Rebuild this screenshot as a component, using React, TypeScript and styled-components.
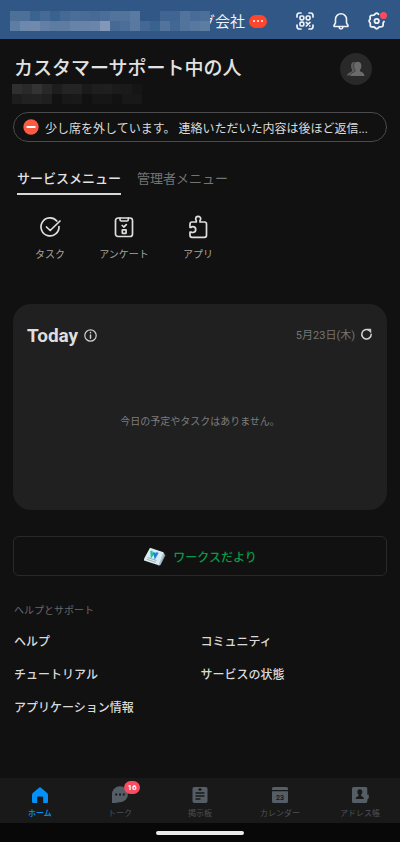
import React from "react";
import styled, { createGlobalStyle } from "styled-components";

const GlobalStyle = createGlobalStyle`
  * { box-sizing: border-box; }
  body {
    margin: 0;
    background: #111111;
    color: #dedede;
    font-family: Roboto, "Noto Sans CJK JP", sans-serif;
  }
  button { font: inherit; color: inherit; background: none; border: 0; padding: 0; cursor: pointer; }
  a { color: inherit; text-decoration: none; }
  h1, h2, p, ul { margin: 0; padding: 0; }
  ul { list-style: none; }
  svg { display: block; }
`;

const Page = styled.div`
  min-height: 100vh;
  display: flex;
  flex-direction: column;
`;

const TopBar = styled.header`
  display: flex;
  align-items: center;
  height: 39px;
  padding: 3px 13px 0 10px;
  background: #305785;
  color: #eef2f7;
`;

const Mosaic = styled.div<{ $columns: number }>`
  position: relative;
  z-index: 1;
  display: grid;
  grid-template-columns: repeat(${(p) => p.$columns}, 10px);
  grid-auto-rows: 10px;
`;

const MosaicCell = styled.span<{ $tone: string }>`
  background: ${(p) => p.$tone};
`;

const CompanyName = styled.span`
  margin-left: -10px;
  padding-top: 2px;
  font-size: 15px;
  line-height: 20px;
`;

const ChatBubble = styled.span`
  display: flex;
  align-items: center;
  justify-content: center;
  gap: 2px;
  width: 18px;
  height: 13px;
  margin-left: 4px;
  border-radius: 7px;
  background: #ff452c;
`;

const BubbleDot = styled.i`
  width: 2px;
  height: 2px;
  border-radius: 1px;
  background: #fff;
`;

const TopActions = styled.div`
  display: flex;
  gap: 16px;
  margin-left: auto;
`;

const IconButton = styled.button`
  position: relative;
  width: 20px;
  height: 20px;
`;

const AlertDot = styled.span`
  position: absolute;
  top: 1px;
  right: 0;
  width: 7px;
  height: 7px;
  border-radius: 50%;
  background: #ff4b5e;
`;

const Content = styled.main`
  padding: 14px 13px 0;
`;

const Profile = styled.section`
  display: flex;
  justify-content: space-between;
  height: 59px;
`;

const UserName = styled.h1`
  padding: 2px 0 1px 1px;
  font-size: 19px;
  line-height: 28px;
  font-weight: 500;
  color: #e2e2e2;
`;

const NameBlock = styled.div`
  > ${Mosaic} { margin-left: -1px; }
`;

const Avatar = styled.button`
  display: flex;
  align-items: center;
  justify-content: center;
  width: 32px;
  height: 32px;
  margin-right: 15px;
  border-radius: 50%;
  background: #292929;
`;

const StatusPill = styled.button`
  display: flex;
  align-items: center;
  gap: 6px;
  width: 100%;
  height: 30px;
  padding: 0 9px;
  border: 1px solid #4b4b4b;
  border-radius: 15px;
  font-size: 12px;
  text-align: left;
  color: #dcdcdc;
`;

const StatusText = styled.span`
  overflow: hidden;
  white-space: nowrap;
  text-overflow: ellipsis;
`;

const Tabs = styled.div`
  display: flex;
  gap: 16px;
  margin-top: 24px;
  padding-left: 4px;
`;

const Tab = styled.button<{ $active?: boolean }>`
  height: 29px;
  padding: 3px 0 4px;
  border-bottom: 2px solid ${(p) => (p.$active ? "#d8d8d8" : "transparent")};
  font-size: 13px;
  line-height: 20px;
  font-weight: ${(p) => (p.$active ? 500 : 400)};
  color: ${(p) => (p.$active ? "#e2e2e2" : "#747474")};
`;

const Services = styled.nav`
  display: grid;
  grid-template-columns: repeat(5, 1fr);
  padding: 20px 4px 0 0;
`;

const Service = styled.a`
  display: flex;
  flex-direction: column;
  align-items: center;
  gap: 8px;
  font-size: 10px;
  line-height: 16px;
  white-space: nowrap;
  color: #a5a5a5;
`;

const TodayCard = styled.section`
  display: flex;
  flex-direction: column;
  min-height: 206px;
  margin-top: 41px;
  padding: 20px 14px;
  border-radius: 18px;
  background: #202020;
`;

const TodayHeader = styled.div`
  display: flex;
  align-items: center;
`;

const TodayTitle = styled.h2`
  margin-right: 6px;
  font-size: 19px;
  line-height: 24px;
  font-weight: 700;
  color: #dedede;
`;

const TodayDate = styled.time`
  margin: 0 5px 0 auto;
  font-size: 11px;
  line-height: 18px;
  color: #757575;
`;

const CardIconButton = styled.button<{ $raised?: boolean }>`
  width: 13px;
  height: 13px;
  margin-bottom: ${(p) => (p.$raised ? 4 : 1)}px;
`;

const EmptyNote = styled.p`
  margin-top: 65px;
  text-align: center;
  font-size: 10px;
  line-height: 18px;
  color: #7d7d7d;
`;

const NewsLink = styled.a`
  display: flex;
  align-items: center;
  justify-content: center;
  gap: 7px;
  height: 40px;
  margin-top: 26px;
  border: 1px solid #292929;
  border-radius: 6px;
  font-size: 12px;
  font-weight: 500;
  color: #079b47;
`;

const HelpTitle = styled.h2`
  margin-top: 27px;
  padding-left: 1px;
  font-size: 10px;
  line-height: 16px;
  font-weight: 400;
  color: #696969;
`;

const HelpList = styled.ul`
  display: grid;
  grid-template-columns: 1fr 1fr;
  row-gap: 15px;
  margin-top: 14px;
  padding-left: 1px;
  font-size: 12px;
  line-height: 18px;
  font-weight: 500;
  color: #dadada;
`;

const BottomNav = styled.nav`
  display: grid;
  grid-template-columns: repeat(5, 1fr);
  height: 45px;
  margin-top: auto;
  padding-top: 7px;
  background: #191919;
`;

const NavItem = styled.a<{ $active?: boolean }>`
  display: flex;
  flex-direction: column;
  align-items: center;
  gap: 3px;
  font-size: 8px;
  line-height: 12px;
  font-weight: ${(p) => (p.$active ? 500 : 400)};
  color: ${(p) => (p.$active ? "#0491f7" : "#4d5257")};
`;

const NavIcon = styled.span<{ $active?: boolean }>`
  position: relative;
  color: ${(p) => (p.$active ? "#0491f7" : "#555e66")};
`;

const Badge = styled.span`
  position: absolute;
  top: -4px;
  left: 14px;
  width: 16px;
  height: 13px;
  border-radius: 7px;
  background: #f94c60;
  color: #fff;
  text-align: center;
  font-size: 8px;
  line-height: 13px;
  font-weight: 700;
`;

const GestureArea = styled.footer`
  display: flex;
  align-items: center;
  justify-content: center;
  height: 19px;
  background: #080808;
`;

const GestureBar = styled.div`
  width: 22%;
  height: 4px;
  border-radius: 2px;
  background: #ece9ea;
`;

const companyTones = [
  "#4d7099", "#4d7099", "#3a6390", "#466a95", "#3a628f", "#456994", "#4b6e98", "#496c97", "#466a95", "#4b6e98",
  "#52749c", "#52749c", "#5b7aa2", "#305785", "#305785", "#416592", "#416592", "#52749c", "#486c97", "#4c6f99",
  "#5e7da4", "#6c88ac", "#7089ad", "#637fa5", "#5e7ba1", "#5e7ba1", "#6883a9", "#6883a9", "#6b84aa", "#8398b8",
  "#466a95", "#4b6e98", "#587aa0", "#446893", "#3a628f", "#52749c", "#426792", "#52749c", "#58789f", "#5c7ca2",
];

const userTones = [
  "#2f2f2f", "#292929", "#333333", "#282828", "#1d1d1d", "#242424", "#242424", "#1a1a1a", "#1e1e1e", "#1f1f1f", "#1b1b1b", "#1a1a1a", "#151515",
  "#1d1d1d", "#212121", "#222222", "#1f1f1f", "#121212", "#181818", "#191919", "#111111", "#161616", "#161616", "#121212", "#181818", "#181818",
];

const Blocks = ({ tones, columns }: { tones: string[]; columns: number }) => (
  <Mosaic $columns={columns} aria-hidden="true">
    {tones.map((tone, i) => (
      <MosaicCell key={i} $tone={tone} />
    ))}
  </Mosaic>
);

const line = {
  fill: "none",
  stroke: "currentColor",
  strokeLinecap: "round" as const,
  strokeLinejoin: "round" as const,
};

const QrIcon = () => (
  <svg width="20" height="20" viewBox="0 0 20 20" {...line} strokeWidth="1.700">
    <path d="M2 6V4.5Q2 2 4.5 2H6M14 2h1.500Q18 2 18 4.500V6M18 14v1.500Q18 18 15.500 18H14M6 18H4.500Q2 18 2 15.500V14" />
    <rect x="5" y="5" width="3.800" height="3.800" rx="1.200" />
    <rect x="11.200" y="5" width="3.800" height="3.800" rx="1.200" />
    <rect x="5" y="11.200" width="3.800" height="3.800" rx="1.200" />
    <path d="M11.300 11.300l1.500 1.500M15 11.300l-3.700 3.700M14.800 14.800v.2" />
  </svg>
);

const BellIcon = () => (
  <svg width="20" height="20" viewBox="0 0 20 20" {...line} strokeWidth="1.600">
    <path d="M4.500 8.200a5.500 5.500 0 0 1 11 0v3.600l1.500 2.700q.3 1-.7 1H3.700q-1 0-.7-1l1.500-2.700zM8 16q.3 2 2 2t2-2" />
  </svg>
);

const GearIcon = () => (
  <svg width="20" height="20" viewBox="0 0 20 20" {...line} strokeWidth="1.800">
    <path d="M11.500 3.200L10.300 2.300Q9.500 1.900 8.700 2.500L7 4.200 4.300 4.400Q3.200 4.600 3.100 5.700L3.200 8 2.300 9.300Q1.900 10 2.300 10.800L3.300 12.200V14.700Q3.500 15.700 4.500 15.800L7.200 16 8.900 17.500Q9.700 18 10.500 17.500L12.300 15.900 15 15.700Q16 15.500 16.100 14.500V12L17 10.500" />
    <circle cx="9.700" cy="10" r="2.200" />
  </svg>
);

const PeopleIcon = () => (
  <svg width="18" height="16" viewBox="0 0 18 16">
    <path d="M0 14.500Q.2 12 3.800 10.900L5 10V8.800Q3.900 7.200 4 4.300Q4.300 1 7.400 1H9V14.500z" fill="#5c5c5c" />
    <path
      d="M7 5Q7.200 .8 10.700 .8T14.400 5Q14.500 7.500 12.900 9.300V10.300Q17.600 11.700 17.500 15H3.300Q3.300 12 8.500 10.400V9.300Q7 7.500 7 5z"
      fill="#6a6a6a"
      stroke="#292929"
      strokeWidth="1"
      paintOrder="stroke"
    />
  </svg>
);

const BusyIcon = () => (
  <svg width="16" height="16" viewBox="0 0 16 16">
    <circle cx="8" cy="8" r="7.700" fill="#fa5b42" />
    <rect x="3.300" y="7" width="9.400" height="2" rx="1" fill="#fff" />
  </svg>
);

const TaskIcon = () => (
  <svg width="24" height="24" viewBox="0 0 24 24" {...line} strokeWidth="1.700" stroke="#dedede">
    <path d="M18.800 6A9 9 0 1 0 21 11.500M8.500 12l3.700 3.500L22 6" />
  </svg>
);

const SurveyIcon = () => (
  <svg width="24" height="24" viewBox="0 0 24 24" {...line} strokeWidth="1.700" stroke="#dedede">
    <rect x="3.500" y="3" width="17" height="18.500" rx="2.500" />
    <path d="M8 3.200v1.300Q8 6 9.300 6H15q1.300 0 1.300-1.500V3.200M10.200 10.500l1.600 1.500 2.500-2.300" />
    <rect x="10.300" y="14.800" width="3.800" height="3.500" rx=".3" />
  </svg>
);

const AppIcon = () => (
  <svg width="24" height="24" viewBox="0 0 24 24" {...line} strokeWidth="1.700" stroke="#dedede">
    <path d="M4 11V9.200Q4 7 6 7H10.300V5.400Q9.600 4.700 9.700 3.800A2.500 2.500 0 0 1 14.700 3.800Q14.700 4.700 14 5.400V7H18.500Q20.500 7 20.500 9V20.300Q20.500 22.300 18.500 22.300H6Q4 22.300 4 20.300V17H5Q5.600 17.500 6.800 17.500A2.900 2.900 0 0 0 6.800 11.700Q5.600 11.700 5 12.300H4z" />
  </svg>
);

const InfoIcon = () => (
  <svg width="13" height="13" viewBox="0 0 13 13" {...line} strokeWidth="1.200" stroke="#cfcfcf">
    <circle cx="6.500" cy="6.500" r="5.700" />
    <path d="M6.500 6v3.300M6.500 3.500v.2" strokeWidth="1.500" />
  </svg>
);

const RefreshIcon = () => (
  <svg width="13" height="13" viewBox="0 0 13 13" {...line} strokeWidth="1.500" stroke="#d5d5d5">
    <path d="M9 2.300A4.700 4.700 0 1 0 11.200 6.300" />
    <path d="M7.700 1.200H10.800V4.300z" fill="#d5d5d5" strokeWidth=".8" />
  </svg>
);

const NewsIcon = () => (
  <svg width="23" height="19" viewBox="0 0 23 19">
    <path d="M18.500 5.500L22.500 8 17.600 18 15.300 18.500z" fill="#91a6b1" />
    <path d="M7 .8L20.500 5.300 15.700 18.300 1 13.400Q.8 12 1.700 10.500z" fill="#dcebf0" />
    <path d="M20.500 5.300l.8 1.500-4.700 11.500-1.200.1z" fill="#b7cbd4" />
    <path d="M4.500 10.500l9 3M3.800 12.300l9 3" stroke="#a0b1bf" strokeWidth="1" />
    <path d="M8.400 3.900l.3 4.800 2.700-3.200" fill="none" stroke="#19c891" strokeWidth="2.200" />
    <path d="M11.400 5.700l.8 4 2.400-4.200" fill="none" stroke="#207fe0" strokeWidth="2.200" />
  </svg>
);

const HomeIcon = () => (
  <svg width="20" height="20" viewBox="0 0 20 20" fill="currentColor">
    <path d="M9 2.700q1-.8 2 0L17.200 8q.8.800.8 2v6.800q0 1.200-1.200 1.200H13.200v-5.300q0-1.200-1.200-1.200H8.400q-1.200 0-1.200 1.200V18H3.200Q2 18 2 16.800V10Q2 8.800 2.800 8z" />
  </svg>
);

const TalkIcon = () => (
  <svg width="20" height="20" viewBox="0 0 20 20">
    <path d="M2 10A8 8 0 1 1 10 17.200Q7.500 17.200 5.200 18H2.300Q2 18 2 17.500z" fill="currentColor" />
    <path d="M5.200 8.400h2v2h-2zm3.800 0h2v2H9zm3.800 0h2v2h-2z" fill="#191919" />
  </svg>
);

const BoardIcon = () => (
  <svg width="20" height="20" viewBox="0 0 20 20">
    <rect x="2.500" y="2" width="15" height="16" rx="1.800" fill="currentColor" />
    <path d="M8.500 4.500h3M5.500 8h9M5.500 11h9M5.500 14h5" stroke="#191919" strokeWidth="1.300" />
    <circle cx="10" cy="4.500" r="1.200" fill="#191919" />
  </svg>
);

const CalendarIcon = () => (
  <svg width="20" height="20" viewBox="0 0 20 20">
    <path d="M2 5V3.500Q2 2 3.500 2h13Q18 2 18 3.500V5zM2 6.200h16v10.300q0 1.500-1.500 1.500h-13Q2 18 2 16.500z" fill="currentColor" />
    <text x="10" y="14.500" textAnchor="middle" fontSize="7" fontWeight="700" fill="#191919">23</text>
  </svg>
);

const ContactsIcon = () => (
  <svg width="20" height="20" viewBox="0 0 20 20">
    <path d="M3.500 2h12.300q1.500 0 1.500 1.500v6.300h1.500v3q0 1-1.200 1.200l-.3 2.500q-.2 1.500-1.700 1.500H3.500Q2 18 2 16.500v-13Q2 2 3.500 2z" fill="currentColor" />
    <path d="M7.300 7Q7.300 4.300 9.800 4.300T12.300 7q0 1.600-1.200 2.800v1.300q2.800.5 2.900 3H5.600q.1-2.500 2.900-3V9.800Q7.300 8.600 7.300 7z" fill="#191919" />
  </svg>
);

const services = [
  { label: "タスク", Icon: TaskIcon },
  { label: "アンケート", Icon: SurveyIcon },
  { label: "アプリ", Icon: AppIcon },
];

const helpLinks = ["ヘルプ", "コミュニティ", "チュートリアル", "サービスの状態", "アプリケーション情報"];

const navItems = [
  { label: "ホーム", Icon: HomeIcon, active: true },
  { label: "トーク", Icon: TalkIcon, badge: 16 },
  { label: "掲示板", Icon: BoardIcon },
  { label: "カレンダー", Icon: CalendarIcon },
  { label: "アドレス帳", Icon: ContactsIcon },
];

export default function App() {
  return (
    <Page lang="ja">
      <GlobalStyle />
      <TopBar>
        <Blocks tones={companyTones} columns={20} />
        <CompanyName>グ会社</CompanyName>
        <ChatBubble>
          <BubbleDot />
          <BubbleDot />
          <BubbleDot />
        </ChatBubble>
        <TopActions>
          <IconButton aria-label="QRコード"><QrIcon /></IconButton>
          <IconButton aria-label="通知"><BellIcon /></IconButton>
          <IconButton aria-label="設定"><GearIcon /><AlertDot /></IconButton>
        </TopActions>
      </TopBar>

      <Content>
        <Profile>
          <NameBlock>
            <UserName>カスタマーサポート中の人</UserName>
            <Blocks tones={userTones} columns={13} />
          </NameBlock>
          <Avatar aria-label="プロフィール"><PeopleIcon /></Avatar>
        </Profile>

        <StatusPill>
          <BusyIcon />
          <StatusText>少し席を外しています。 連絡いただいた内容は後ほど返信...</StatusText>
        </StatusPill>

        <Tabs role="tablist">
          <Tab role="tab" aria-selected="true" $active>サービスメニュー</Tab>
          <Tab role="tab" aria-selected="false">管理者メニュー</Tab>
        </Tabs>

        <Services>
          {services.map(({ label, Icon }) => (
            <Service key={label} href="#"><Icon />{label}</Service>
          ))}
        </Services>

        <TodayCard>
          <TodayHeader>
            <TodayTitle>Today</TodayTitle>
            <CardIconButton aria-label="情報"><InfoIcon /></CardIconButton>
            <TodayDate>5月23日(木)</TodayDate>
            <CardIconButton aria-label="更新" $raised><RefreshIcon /></CardIconButton>
          </TodayHeader>
          <EmptyNote>今日の予定やタスクはありません。</EmptyNote>
        </TodayCard>

        <NewsLink href="#"><NewsIcon />ワークスだより</NewsLink>

        <HelpTitle>ヘルプとサポート</HelpTitle>
        <HelpList>
          {helpLinks.map((label) => (
            <li key={label}><a href="#">{label}</a></li>
          ))}
        </HelpList>
      </Content>

      <BottomNav>
        {navItems.map(({ label, Icon, active, badge }) => (
          <NavItem key={label} href="#" $active={active}>
            <NavIcon $active={active}>
              <Icon />
              {badge && <Badge>{badge}</Badge>}
            </NavIcon>
            {label}
          </NavItem>
        ))}
      </BottomNav>
      <GestureArea><GestureBar /></GestureArea>
    </Page>
  );
}
